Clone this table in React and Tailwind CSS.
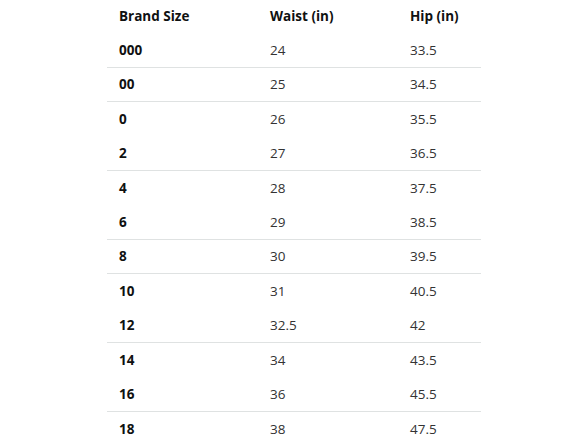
const rows = [
  ["000", "24", "33.5", true],
  ["00", "25", "34.5", true],
  ["0", "26", "35.5", false],
  ["2", "27", "36.5", true],
  ["4", "28", "37.5", false],
  ["6", "29", "38.5", true],
  ["8", "30", "39.5", true],
  ["10", "31", "40.5", false],
  ["12", "32.5", "42", true],
  ["14", "34", "43.5", false],
  ["16", "36", "45.5", true],
  ["18", "38", "47.5", false],
];

export default function App() {
  return (
    <div
      className="w-[588px] h-[441px] overflow-hidden bg-white pl-[107px]"
      style={{ fontFamily: '"Open Sans", "Noto Sans", sans-serif' }}
    >
      <table className="w-[374px] border-collapse text-[13.5px] text-[#333]">
        <thead>
          <tr className="h-[33px] font-bold text-[#0f1111]">
            <th className="w-[151px] pl-3 text-left">Brand Size</th>
            <th className="w-[140px] pl-3 text-left">Waist (in)</th>
            <th className="pl-3 text-left">Hip (in)</th>
          </tr>
        </thead>
        <tbody>
          {rows.map(([size, waist, hip, line]) => (
            <tr
              key={size}
              className={`h-[34.4px] ${line ? "border-b border-[#dfe2e2]" : ""}`}
            >
              <td className="pl-3 font-bold text-[#0f1111]">{size}</td>
              <td className="pl-3">{waist}</td>
              <td className="pl-3">{hip}</td>
            </tr>
          ))}
        </tbody>
      </table>
    </div>
  );
}
